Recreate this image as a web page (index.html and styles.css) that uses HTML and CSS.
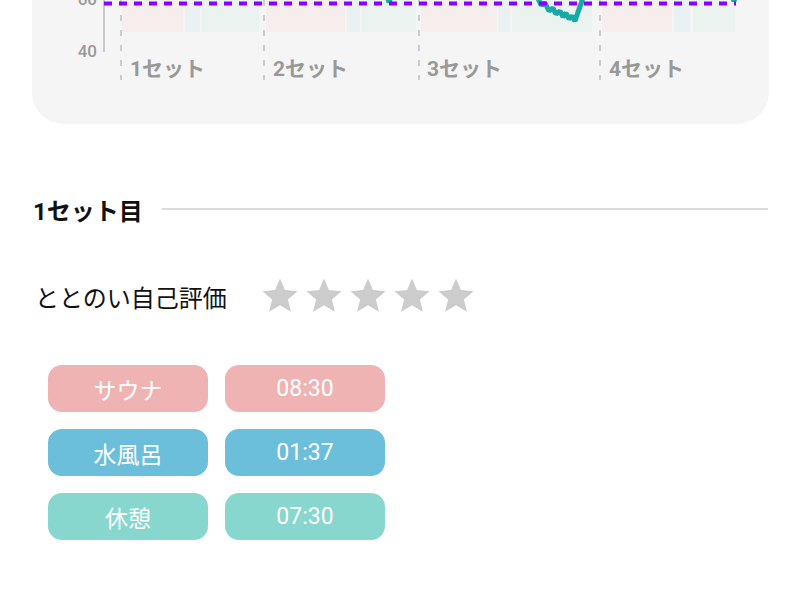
FILE: index.html
```html
<!DOCTYPE html>
<html lang="ja">
<head>
    <meta charset="UTF-8">
    <meta name="viewport" content="width=device-width, initial-scale=1.0">
    <title>セット記録</title>
    <link rel="stylesheet" href="styles.css">
</head>
<body>
    <div class="chart-card">
        <svg class="chart" width="737" height="124" viewBox="32 0 737 124">
            <!-- phase bands -->
            <g class="band-sauna">
                <rect x="122" y="0" width="61" height="32"/>
                <rect x="266" y="0" width="79" height="32"/>
                <rect x="421" y="0" width="76" height="32"/>
                <rect x="602" y="0" width="70" height="32"/>
            </g>
            <g class="band-water">
                <rect x="185" y="0" width="15" height="32"/>
                <rect x="347" y="0" width="13" height="32"/>
                <rect x="498" y="0" width="12" height="32"/>
                <rect x="674" y="0" width="16" height="32"/>
            </g>
            <g class="band-rest">
                <rect x="202" y="0" width="57" height="32"/>
                <rect x="362" y="0" width="54" height="32"/>
                <rect x="512" y="0" width="80" height="32"/>
                <rect x="693" y="0" width="42" height="32"/>
            </g>

            <line class="axis" x1="104" y1="0" x2="104" y2="52"/>
            <text class="tick" x="97" y="5" text-anchor="end">60</text>
            <text class="tick" x="97" y="57" text-anchor="end">40</text>

            <g class="set-line">
                <line x1="121" y1="0" x2="121" y2="80"/>
                <line x1="264" y1="0" x2="264" y2="80"/>
                <line x1="419" y1="0" x2="419" y2="80"/>
                <line x1="600" y1="0" x2="600" y2="80"/>
            </g>

            <g class="heart">
                <polyline points="386,-6 389,2 392,-6"/>
                <polyline points="536,-6 541,5 545,3 549,11 553,8 556,14 560,11 563,17 566,13 569,19 572,16 575,21 578,12 581,4 584,-6"/>
                <polyline points="731,-6 734,1 737,-6"/>
            </g>

            <line class="target" x1="104" y1="3.5" x2="736" y2="3.5"/>

            <text class="set-label" x="130" y="76">1セット</text>
            <text class="set-label" x="273" y="76">2セット</text>
            <text class="set-label" x="427" y="76">3セット</text>
            <text class="set-label" x="609" y="76">4セット</text>
        </svg>
    </div>

    <div class="section-head">
        <span class="section-title">1セット目</span>
        <span class="section-rule"></span>
    </div>

    <div class="rating">
        <span class="rating-label">ととのい自己評価</span>
        <div class="stars">
            <svg class="star" viewBox="0 0 24 24"><path d="M12 17.27L18.18 21l-1.64-7.03L22 9.24l-7.19-.61L12 2 9.19 8.63 2 9.24l5.46 4.73L5.82 21z"/></svg>
            <svg class="star" viewBox="0 0 24 24"><path d="M12 17.27L18.18 21l-1.64-7.03L22 9.24l-7.19-.61L12 2 9.19 8.63 2 9.24l5.46 4.73L5.82 21z"/></svg>
            <svg class="star" viewBox="0 0 24 24"><path d="M12 17.27L18.18 21l-1.64-7.03L22 9.24l-7.19-.61L12 2 9.19 8.63 2 9.24l5.46 4.73L5.82 21z"/></svg>
            <svg class="star" viewBox="0 0 24 24"><path d="M12 17.27L18.18 21l-1.64-7.03L22 9.24l-7.19-.61L12 2 9.19 8.63 2 9.24l5.46 4.73L5.82 21z"/></svg>
            <svg class="star" viewBox="0 0 24 24"><path d="M12 17.27L18.18 21l-1.64-7.03L22 9.24l-7.19-.61L12 2 9.19 8.63 2 9.24l5.46 4.73L5.82 21z"/></svg>
        </div>
    </div>

    <div class="phases">
        <div class="pill pill-sauna">サウナ</div>
        <div class="pill pill-sauna">08:30</div>
        <div class="pill pill-water">水風呂</div>
        <div class="pill pill-water">01:37</div>
        <div class="pill pill-rest">休憩</div>
        <div class="pill pill-rest">07:30</div>
    </div>
</body>
</html>
```

FILE: styles.css
```css
body {
    margin: 0;
    background-color: #ffffff;
    color: #111111;
    font-family: Roboto, "Noto Sans CJK JP", sans-serif;
}
.chart-card {
    margin: 0 31px 0 32px;
    height: 124px;
    background-color: #f5f5f5;
    border-radius: 0 0 32px 32px;
    overflow: hidden;
}
.chart {
    display: block;
}
.band-sauna rect {
    fill: #f6eeed;
}
.band-water rect {
    fill: #eaf1f3;
}
.band-rest rect {
    fill: #ebf3f1;
}
.axis {
    stroke: #bbbbbb;
    stroke-width: 1.5;
}
.tick {
    fill: #999999;
    font-size: 17px;
    font-weight: 500;
}
.set-line line {
    stroke: #cccccc;
    stroke-width: 2;
    stroke-dasharray: 6 9;
}
.heart polyline {
    fill: none;
    stroke: #17a9a6;
    stroke-width: 5;
    stroke-linejoin: bevel;
}
.target {
    stroke: #8800ff;
    stroke-width: 4;
    stroke-dasharray: 8 7;
}
.set-label {
    fill: #999999;
    font-size: 21px;
    font-weight: 700;
}
.section-head {
    display: flex;
    align-items: center;
    gap: 19px;
    height: 30px;
    margin-top: 70px;
    padding: 0 32px 0 33px;
}
.section-title {
    font-size: 24px;
    font-weight: 700;
    white-space: nowrap;
}
.section-rule {
    flex: 1;
    height: 2px;
    background-color: #dddddd;
}
.rating {
    display: flex;
    align-items: center;
    gap: 32px;
    height: 42px;
    margin-top: 51px;
    padding-left: 35px;
}
.rating-label {
    font-size: 24px;
}
.stars {
    display: flex;
    gap: 2px;
}
.star {
    width: 42px;
    height: 42px;
    fill: #cccccc;
}
.phases {
    display: grid;
    grid-template-columns: 160px 160px;
    gap: 17px;
    margin-top: 48px;
    padding-left: 48px;
}
.pill {
    height: 47px;
    border-radius: 14px;
    color: #ffffff;
    font-size: 23px;
    display: flex;
    align-items: center;
    justify-content: center;
}
.pill-sauna {
    background-color: #eeb3b2;
}
.pill-water {
    background-color: #6bbfdb;
}
.pill-rest {
    background-color: #88d7ce;
}
```
